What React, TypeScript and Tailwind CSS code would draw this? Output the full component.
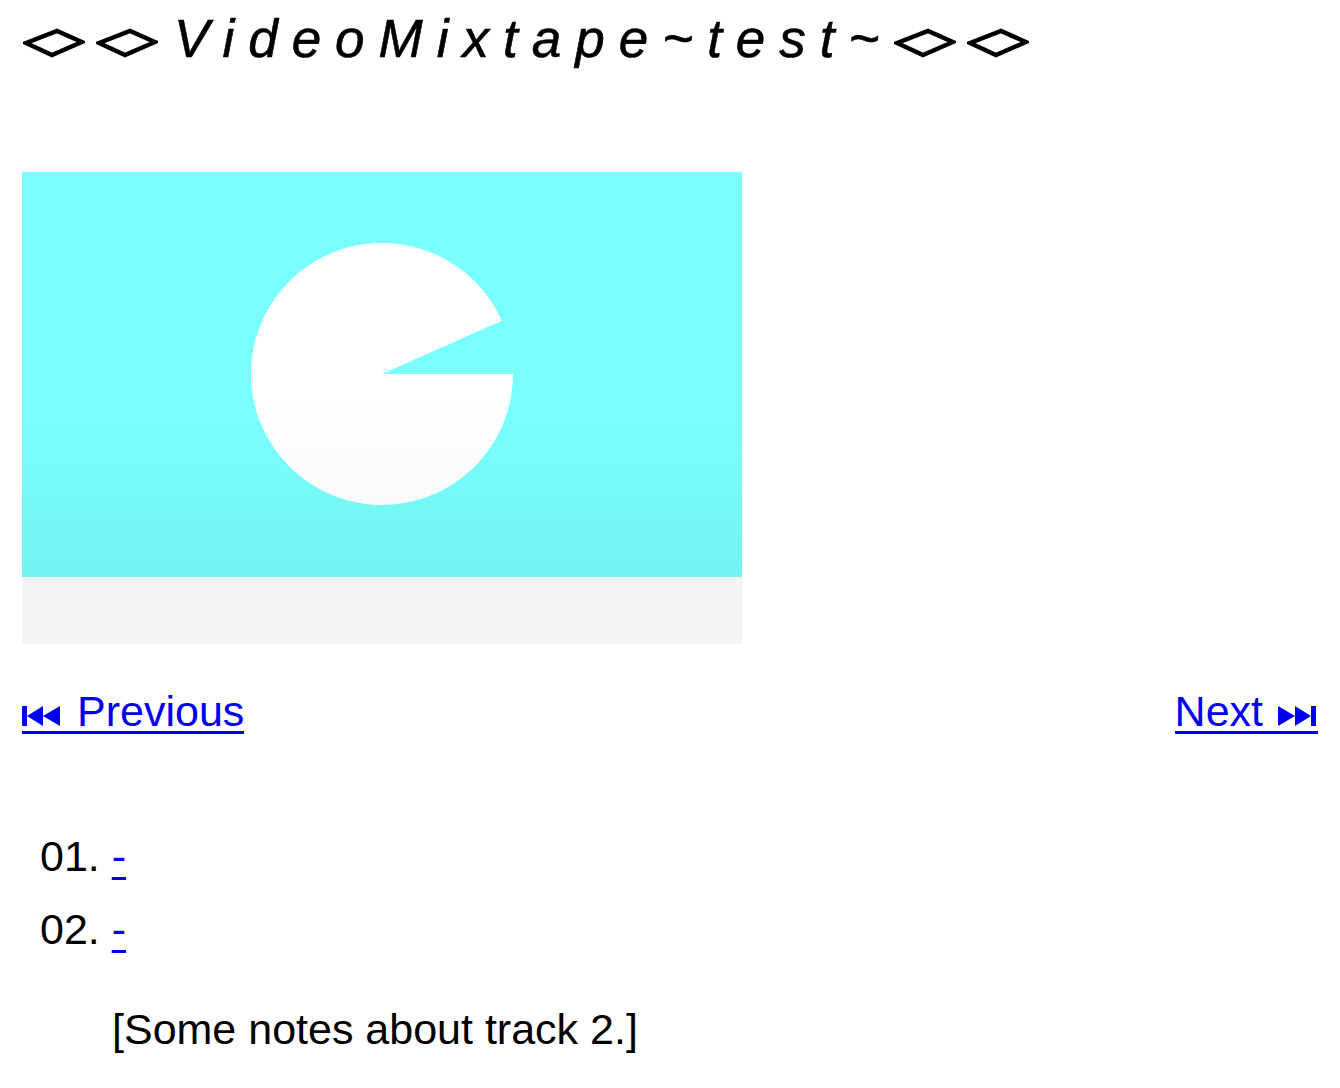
import React from "react";

const Diamond = ({ className = "" }: { className?: string }) => (
  <svg width="62" height="30" viewBox="0 0 62 30" className={className}>
    <polygon points="3,15 34,3 59,14 29,27" fill="none" stroke="#000" strokeWidth="4.4" strokeLinejoin="miter" />
  </svg>
);

const PrevIcon = () => (
  <svg width="38" height="20" viewBox="0 0 38 20" className="mb-[4px] mr-[17px] shrink-0">
    <rect x="0" y="0" width="5" height="20" fill="#0000ee" />
    <polygon points="5,10 21,0 21,20" fill="#0000ee" />
    <polygon points="21,10 38,0 38,20" fill="#0000ee" />
  </svg>
);

const NextIcon = () => (
  <svg width="38" height="20" viewBox="0 0 38 20" className="mb-[4px] ml-[15px] mr-[2px] shrink-0">
    <polygon points="0,0 17,10 0,20" fill="#0000ee" />
    <polygon points="17,0 33,10 17,20" fill="#0000ee" />
    <rect x="33" y="0" width="5" height="20" fill="#0000ee" />
  </svg>
);

export default function App() {
  const font = { fontFamily: '"Liberation Sans", Arial, Helvetica, sans-serif' };
  return (
    <div className="min-h-[1088px] w-[1340px] bg-white text-black px-[22px]" style={font}>
      <h1 className="flex items-start pt-[12px] pl-[1px] text-[53px] leading-none font-normal">
        <Diamond className="mt-[16px] mr-[11px] shrink-0" />
        <Diamond className="mt-[16px] mr-[16px] shrink-0" />
        <span className="italic tracking-[14px] whitespace-nowrap [-webkit-text-stroke:0.6px_black]">VideoMixtape~test~</span>
        <Diamond className="mt-[16px] mr-[11px] shrink-0" />
        <Diamond className="mt-[16px] shrink-0" />
      </h1>

      <div className="mt-[107px] w-[720px]">
        <div className="h-[405px] w-[720px]">
          <svg width="720" height="405" viewBox="0 0 720 405" className="block">
            <defs>
              <linearGradient id="shade" x1="0" y1="0" x2="0" y2="1">
                <stop offset="0.6" stopColor="#000" stopOpacity="0" />
                <stop offset="1" stopColor="#000" stopOpacity="0.05" />
              </linearGradient>
              <linearGradient id="pac" x1="0" y1="0" x2="0" y2="1">
                <stop offset="0.6" stopColor="#ffffff" />
                <stop offset="1" stopColor="#fafafa" />
              </linearGradient>
            </defs>
            <rect x="0" y="0" width="720" height="405" fill="#79ffff" />
            <rect x="0" y="0" width="720" height="405" fill="url(#shade)" />
            <path d="M360,202 L491,202 A131,131 0 1,1 479.7,148.7 Z" fill="url(#pac)" />
          </svg>
        </div>
        <div className="h-[67px] bg-[#f4f4f4]" />
      </div>

      <div className="mt-[47px] flex justify-between text-[43px] leading-[40px] text-[#0000ee]">
        <a href="#" className="inline-flex items-baseline border-b-[3px] border-[#0000ee]">
          <PrevIcon />
          <span>Previous</span>
        </a>
        <a href="#" className="inline-flex items-baseline border-b-[3px] border-[#0000ee]">
          <span>Next</span>
          <NextIcon />
        </a>
      </div>

      <div className="mt-[101px] pl-[18px] text-[43px] leading-none">
        <div className="flex items-baseline">
          <span>01.&nbsp;</span>
          <a href="#" className="text-[#0000ee] underline decoration-[3px] underline-offset-[6px]">-</a>
        </div>
        <div className="mt-[30px] flex items-baseline">
          <span>02.&nbsp;</span>
          <a href="#" className="text-[#0000ee] underline decoration-[3px] underline-offset-[6px]">-</a>
        </div>
        <p className="mt-[57px] pl-[72px]">[Some notes about track 2.]</p>
      </div>
    </div>
  );
}
